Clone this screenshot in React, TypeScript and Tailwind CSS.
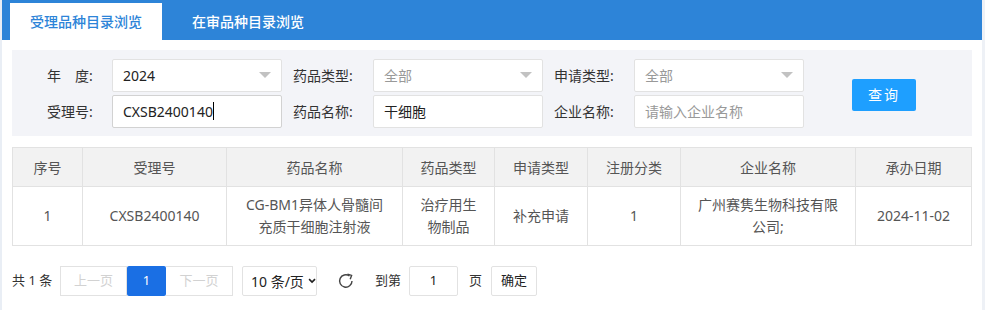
import React from "react";

const font = { fontFamily: '"Noto Sans", "Noto Sans CJK SC", sans-serif' };

function Caret() {
  return <span className="ml-auto w-0 h-0 border-l-[6px] border-r-[6px] border-t-[6px] border-l-transparent border-r-transparent border-t-[#c2c2c2]" />;
}

export default function App() {
  const cols = [
    { w: "w-[70px]", h: "序号" },
    { w: "w-[144px]", h: "受理号" },
    { w: "w-[176px]", h: "药品名称" },
    { w: "w-[92px]", h: "药品类型" },
    { w: "w-[93px]", h: "申请类型" },
    { w: "w-[93px]", h: "注册分类" },
    { w: "w-[175px]", h: "企业名称" },
    { w: "flex-1", h: "承办日期" },
  ];
  const row = ["1", "CXSB2400140", "CG-BM1异体人骨髓间充质干细胞注射液", "治疗用生物制品", "补充申请", "1", "广州赛隽生物科技有限公司;", "2024-11-02"];
  return (
    <div className="w-[985px] h-[310px] bg-white text-[14px] text-[#333] relative overflow-hidden" style={font}>
      <div className="absolute left-0 top-0 bottom-0 w-[2px] bg-[#e9eef5]" />
      <div className="absolute right-0 top-0 bottom-0 w-[3px] bg-[#eef1f6]" />
      <div className="w-[982px] h-[40px] bg-[#2d84d8] flex items-end pl-[10px]">
        <div className="h-[37px] w-[152px] bg-white flex items-center justify-center text-[#2d84d8] font-medium">受理品种目录浏览</div>
        <div className="h-[37px] w-[172px] flex items-center justify-center text-white font-medium">在审品种目录浏览</div>
      </div>
      <div className="pl-[12px] pr-[13px] pt-[10px]">
        <div className="bg-[#f3f4f8] h-[86px] w-[960px] flex items-center">
          <div className="flex flex-col gap-[3px]">
            <div className="flex items-center h-[33px]">
              <span className="w-[100px] pl-[35px]">年　度:</span>
              <div className="w-[170px] h-[33px] bg-white border border-[#e2e2e2] rounded-[2px] flex items-center px-[10px] text-[#222]">2024<Caret /></div>
              <span className="w-[91px] pl-[11px]">药品类型:</span>
              <div className="w-[170px] h-[33px] bg-white border border-[#e2e2e2] rounded-[2px] flex items-center px-[10px] text-[#999]">全部<Caret /></div>
              <span className="w-[91px] pl-[11px]">申请类型:</span>
              <div className="w-[170px] h-[33px] bg-white border border-[#e2e2e2] rounded-[2px] flex items-center px-[10px] text-[#999]">全部<Caret /></div>
            </div>
            <div className="flex items-center h-[33px]">
              <span className="w-[100px] pl-[35px]">受理号:</span>
              <div className="w-[170px] h-[33px] bg-white border border-[#d2d2d2] rounded-[2px] flex items-center px-[10px] text-[#222]">CXSB2400140<span className="w-px h-[18px] bg-black" /></div>
              <span className="w-[91px] pl-[11px]">药品名称:</span>
              <div className="w-[170px] h-[33px] bg-white border border-[#e2e2e2] rounded-[2px] flex items-center px-[10px] text-[#222]">干细胞</div>
              <span className="w-[91px] pl-[11px]">企业名称:</span>
              <div className="w-[170px] h-[33px] bg-white border border-[#e2e2e2] rounded-[2px] flex items-center px-[10px] text-[#999]">请输入企业名称</div>
            </div>
          </div>
          <button className="ml-[48px] mt-[3px] w-[64px] h-[32px] bg-[#1e9fff] text-white rounded-[2px] tracking-[2px]">查询</button>
        </div>
        <div className="mt-[11px] w-[960px] border border-[#e2e2e2] text-[#555]">
          <div className="flex h-[39px] bg-[#f2f2f2] border-b border-[#e2e2e2]">
            {cols.map((c, i) => (
              <div key={i} className={`${c.w} flex items-center justify-center ${i < cols.length - 1 ? "border-r border-[#e2e2e2]" : ""}`}>{c.h}</div>
            ))}
          </div>
          <div className="flex h-[58px]">
            {cols.map((c, i) => (
              <div key={i} className={`${c.w} flex items-center justify-center text-center leading-[22px] px-[14px] ${i < cols.length - 1 ? "border-r border-[#e2e2e2]" : ""}`}>{row[i]}</div>
            ))}
          </div>
        </div>
      </div>
      <div className="flex items-center mt-[20px] pl-[12px] text-[13px] text-[#333] whitespace-nowrap">
        <span className="w-[48px]">共 1 条</span>
        <div className="flex h-[30px] shrink-0">
          <div className="w-[67px] border border-[#e2e2e2] flex items-center justify-center text-[#d2d2d2]">上一页</div>
          <div className="w-[39px] bg-[#1a6fe4] rounded-[2px] flex items-center justify-center text-white">1</div>
          <div className="w-[67px] border border-[#e2e2e2] border-l-0 flex items-center justify-center text-[#d2d2d2]">下一页</div>
        </div>
        <div className="ml-[9px] w-[75px] h-[30px] shrink-0 border border-[#e2e2e2] rounded-[2px] flex items-center pl-[8px] text-[14px] text-[#222]">
          10 条/页
          <svg width="11" height="8" viewBox="0 0 11 8" className="ml-[4px]"><path d="M1.5 1.5 L5.5 5.5 L9.5 1.5" stroke="#222" strokeWidth="2.2" fill="none" /></svg>
        </div>
        <svg width="20" height="20" viewBox="0 0 20 20" className="ml-[19px] shrink-0">
          <path d="M16 10 A6.2 6.2 0 1 1 13.5 5" stroke="#444" strokeWidth="1.4" fill="none" />
          <path d="M11.5 3.2 L15.6 4.4 L14.2 8.3" stroke="#444" strokeWidth="1.4" fill="none" />
        </svg>
        <span className="ml-[19px]">到第</span>
        <div className="ml-[8px] w-[49px] h-[30px] shrink-0 border border-[#e2e2e2] rounded-[2px] flex items-center justify-center text-[#222]">1</div>
        <span className="ml-[11px]">页</span>
        <div className="ml-[9px] w-[46px] h-[30px] shrink-0 border border-[#e2e2e2] rounded-[2px] flex items-center justify-center text-[#222]">确定</div>
      </div>
    </div>
  );
}
